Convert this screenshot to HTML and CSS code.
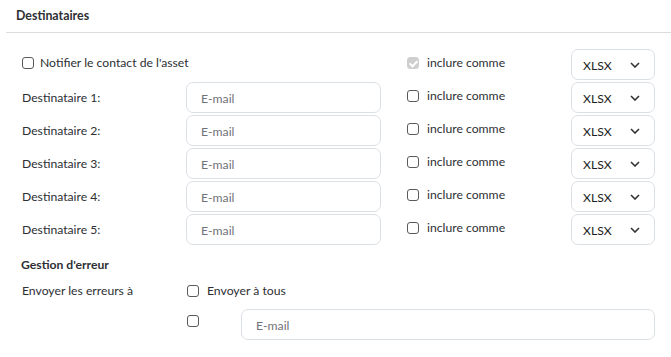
FILE: index.html
```html
<!DOCTYPE html>
<html lang="fr">

<head>
    <meta charset="UTF-8">
    <meta name="viewport" content="width=device-width, initial-scale=1.0">
    <title>Destinataires</title>
    <link rel="stylesheet" href="styles.css">
</head>

<body>
    <div class="section-title">Destinataires</div>

    <div class="recipients">
        <div class="row">
            <label class="check span3 tight"><span class="box"></span>Notifier le contact de l'asset</label>
            <label class="check"><span class="box checked disabled"></span>inclure comme</label>
            <div class="select">XLSX <svg class="chevron" viewBox="0 0 10 6"><polyline points="1,1 5,5 9,1"/></svg></div>
        </div>
        <div class="row">
            <span class="label">Destinataire 1:</span>
            <div class="input">E-mail</div>
            <span></span>
            <label class="check"><span class="box"></span>inclure comme</label>
            <div class="select">XLSX <svg class="chevron" viewBox="0 0 10 6"><polyline points="1,1 5,5 9,1"/></svg></div>
        </div>
        <div class="row">
            <span class="label">Destinataire 2:</span>
            <div class="input">E-mail</div>
            <span></span>
            <label class="check"><span class="box"></span>inclure comme</label>
            <div class="select">XLSX <svg class="chevron" viewBox="0 0 10 6"><polyline points="1,1 5,5 9,1"/></svg></div>
        </div>
        <div class="row">
            <span class="label">Destinataire 3:</span>
            <div class="input">E-mail</div>
            <span></span>
            <label class="check"><span class="box"></span>inclure comme</label>
            <div class="select">XLSX <svg class="chevron" viewBox="0 0 10 6"><polyline points="1,1 5,5 9,1"/></svg></div>
        </div>
        <div class="row">
            <span class="label">Destinataire 4:</span>
            <div class="input">E-mail</div>
            <span></span>
            <label class="check"><span class="box"></span>inclure comme</label>
            <div class="select">XLSX <svg class="chevron" viewBox="0 0 10 6"><polyline points="1,1 5,5 9,1"/></svg></div>
        </div>
        <div class="row">
            <span class="label">Destinataire 5:</span>
            <div class="input">E-mail</div>
            <span></span>
            <label class="check"><span class="box"></span>inclure comme</label>
            <div class="select">XLSX <svg class="chevron" viewBox="0 0 10 6"><polyline points="1,1 5,5 9,1"/></svg></div>
        </div>
    </div>

    <div class="errors">
        <div class="sub-title">Gestion d'erreur</div>
        <div class="err-row">
            <span class="label">Envoyer les erreurs à</span>
            <label class="check wide"><span class="box"></span>Envoyer à tous</label>
        </div>
        <div class="err-row">
            <span></span>
            <label class="check"><span class="box"></span></label>
            <div class="input">E-mail</div>
        </div>
    </div>
</body>

</html>
```

FILE: styles.css
```css
* {
    margin: 0;
    padding: 0;
    box-sizing: border-box;
}

body {
    font-family: Lato, "Noto Sans", sans-serif;
    font-size: 12.2px;
    color: #2d2f33;
    background: #fff;
}

.section-title {
    font-weight: bold;
    font-size: 12.4px;
    margin-left: 6px;
    padding: 8px 10px 9px;
    border-bottom: 1px solid #dcdcdc;
    line-height: 15px;
}

.recipients {
    padding: 16px 0 0 22px;
    display: flex;
    flex-direction: column;
    gap: 2px;
}

.row {
    display: grid;
    grid-template-columns: 164px 195px 26px 164px 84px;
    height: 31px;
    align-items: center;
}

.span3 {
    grid-column: span 3;
}

.label {
    align-self: start;
    padding-top: 8px;
}

.input {
    height: 31px;
    border: 1px solid #dbe0e5;
    border-radius: 7px;
    padding: 1px 14px 0;
    display: flex;
    align-items: center;
    color: #6f7378;
}

.check {
    display: flex;
    align-items: center;
    gap: 8px;
    align-self: start;
    padding-top: 6px;
}

.check.tight {
    gap: 6px;
}

.box {
    width: 12px;
    height: 12px;
    border: 1px solid #5a5a5a;
    border-radius: 3px;
    flex: none;
    position: relative;
}

.box.checked.disabled {
    background: #cfcfcf;
    border-color: #cfcfcf;
}

.box.checked::after {
    content: "";
    position: absolute;
    left: 3px;
    top: 1px;
    width: 3px;
    height: 6px;
    border: solid #fff;
    border-width: 0 2px 2px 0;
    transform: rotate(45deg);
}

.select {
    height: 31px;
    border: 1px solid #dbe0e5;
    border-radius: 7px;
    padding: 1px 14px 0 11px;
    display: flex;
    align-items: center;
    justify-content: space-between;
    color: #1b1d20;
}

.chevron {
    width: 10px;
    height: 6px;
    fill: none;
    stroke: #333;
    stroke-width: 1.6;
}

.errors {
    padding: 12px 0 0 22px;
}

.sub-title {
    font-weight: bold;
    margin-left: -1px;
    line-height: 15px;
    margin-bottom: 11px;
}

.err-row {
    display: grid;
    grid-template-columns: 165px 54px 414px;
    margin-bottom: 11px;
}

.err-row .label {
    padding-top: 0;
}

.err-row .check {
    padding-top: 0;
}

.err-row .wide {
    grid-column: span 2;
}

.err-row:last-child .check {
    padding-top: 6px;
    align-self: start;
}
```
